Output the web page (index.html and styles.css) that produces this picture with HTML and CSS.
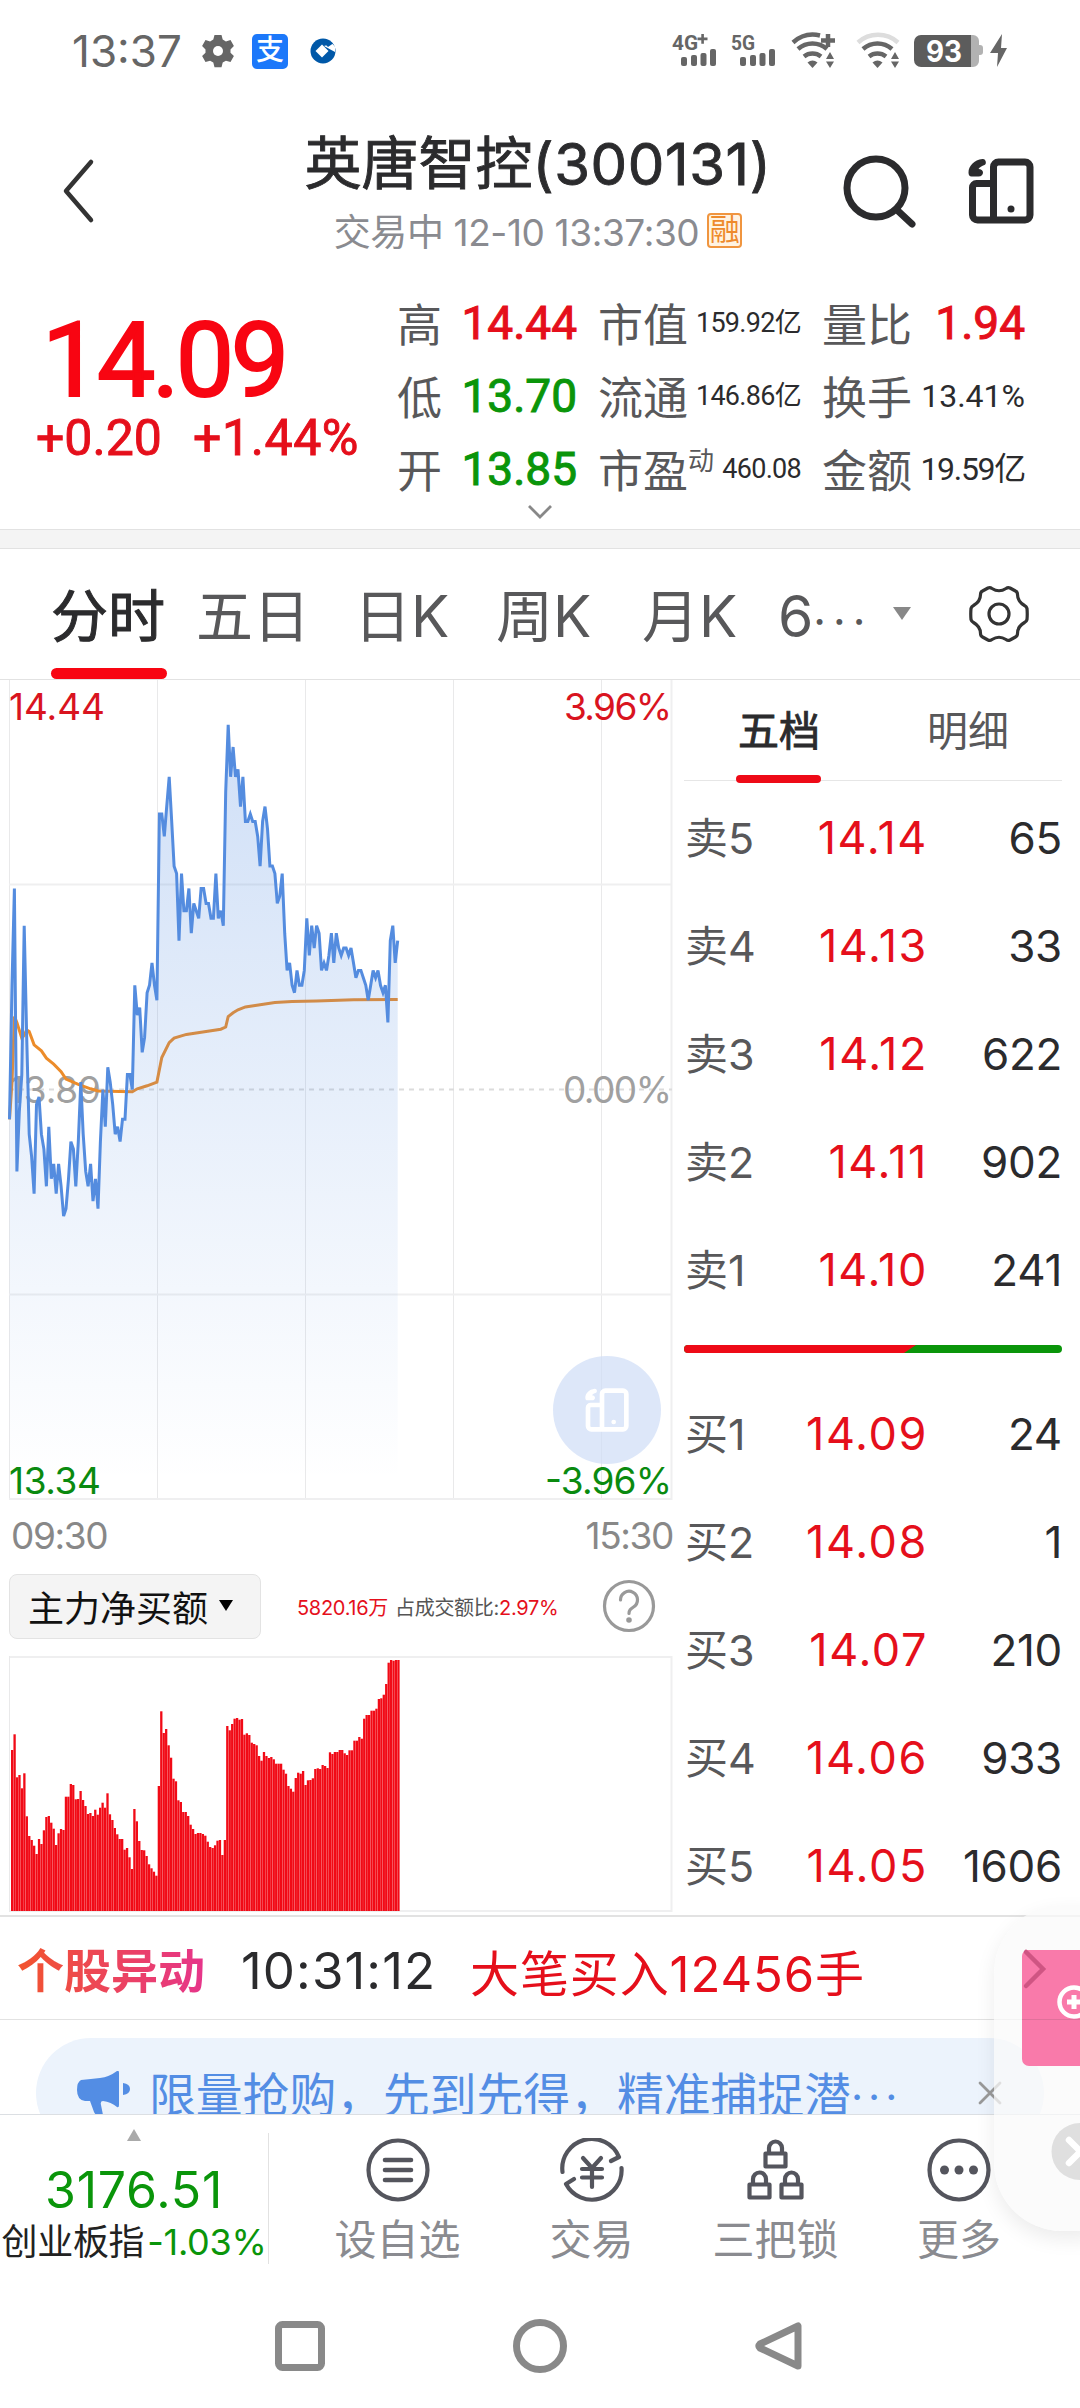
FILE: index.html
```html
<!DOCTYPE html>
<html lang="zh-CN">
<head>
    <meta charset="UTF-8">
    <meta name="viewport" content="width=device-width, initial-scale=1.0">
    <title>英唐智控(300131)</title>
    <link rel="stylesheet" href="styles.css">
</head>
<body>
    <div id="app">
        <div class="status-bar">
            <span class="clock">13:37</span>
            <svg class="st-gear" width="34" height="34" viewBox="0 0 34 34">
                <path d="M13.5 1h7l1.2 4.6 3.2 1.8 4.6-1.3 3.4 6-3.4 3.3v3.4l3.4 3.3-3.4 6-4.6-1.3-3.2 1.8-1.2 4.6h-7l-1.2-4.6-3.2-1.8-4.6 1.3-3.4-6 3.4-3.3v-3.4L1.1 12.1l3.4-6 4.6 1.3 3.2-1.8z" fill="#666"/>
                <circle cx="17" cy="17" r="5" fill="#fff"/>
            </svg>
            <span class="st-pay">支</span>
            <svg class="st-bank" width="26" height="26" viewBox="0 0 26 26">
                <circle cx="13" cy="13" r="12.5" fill="#0058a8"/>
                <path d="M12 6.5l6.5 6.5-6.5 6.5-6.5-6.5z" fill="#fff"/>
                <path d="M14 8l11 6V8.5l-3-3z" fill="#fff"/>
                <path d="M15.5 1l7.5 4.5-5 3.5-4-4z" fill="#0058a8"/>
            </svg>
            <svg class="st-right" width="340" height="40" viewBox="0 0 340 40" fill="#666">
                <g class="net-txt">
                    <text x="0" y="19" textLength="26" lengthAdjust="spacingAndGlyphs">4G</text>
                    <path d="M25.5 6.5h3.8V3h2.6v3.5h3.6v2.7h-3.6v3.5h-2.6V9.2h-3.8z"/>
                    <text x="59" y="19" textLength="24" lengthAdjust="spacingAndGlyphs">5G</text>
                </g>
                <g id="bars1">
                    <rect x="9" y="26" width="6" height="9" rx="2"/><rect x="19" y="24" width="6" height="11" rx="2"/>
                    <rect x="28.5" y="22" width="6" height="13" rx="2"/><rect x="38" y="18" width="6" height="17" rx="2"/>
                </g>
                <use href="#bars1" x="59"/>
                <g id="wifi" fill="none" stroke="#666" stroke-width="4.5">
                    <path d="M126 18a22 22 0 0 1 29 0M132 25.5a14 14 0 0 1 17 0"/>
                    <path d="M135.5 31.5a8 8 0 0 1 10 0l-5 5.5z" fill="#666" stroke="none"/>
                    <path d="M158 21l4 7h-8zM158 37l4-6.5h-8z" fill="#666" stroke="none"/>
                </g>
                <path d="M121 11.5a30 30 0 0 1 27-7M149 9.5h14M156 3v13" fill="none" stroke="#666" stroke-width="4.5"/>
                <use href="#wifi" x="65"/>
                <path d="M186 11.5a30 30 0 0 1 40 0" fill="none" stroke="#ddd" stroke-width="4.5"/>
                <path d="M296 4h5a6 6 0 0 1 6 6v4h1a3 3 0 0 1 3 3v4a3 3 0 0 1-3 3h-1v6a6 6 0 0 1-6 6h-5z" fill="#b2b2b2"/>
                <path d="M249 4h50v32h-50a7 7 0 0 1-7-7V11a7 7 0 0 1 7-7z" fill="#5c5c5c"/>
                <text class="batt" x="254" y="30.5" textLength="36" lengthAdjust="spacingAndGlyphs">93</text>
                <path d="M330 3l-12 19h8l-1 14 10-19h-6z"/>
            </svg>
        </div>

        <div class="header">
            <svg class="back" width="40" height="66" viewBox="0 0 40 66"><path d="M33 4L8 33l25 29" fill="none" stroke="#333" stroke-width="4.5" stroke-linecap="round" stroke-linejoin="round"/></svg>
            <div class="title">
                <h1>英唐智控<span>(300131)</span></h1>
                <p>交易中 12-10 13:37:30<i>融</i></p>
            </div>
            <svg class="search" width="76" height="76" viewBox="0 0 76 76" fill="none" stroke="#2b2b2d" stroke-width="7" stroke-linecap="round"><circle cx="34" cy="34" r="29"/><path d="M55 56l15 14"/></svg>
            <svg class="split" width="66" height="66" viewBox="0 0 66 66">
                <g id="panel">
                    <path d="M25.5 25.5H8.5a4 4 0 0 0-4 4V57a5 5 0 0 0 5 5H57a5 5 0 0 0 5-5V9a5 5 0 0 0-5-5H30.5a5 5 0 0 0-5 5v53" fill="none" stroke="currentColor" stroke-width="7"/>
                    <circle cx="43" cy="51" r="3.5" fill="currentColor"/>
                    <path d="M14.5 1C6 2 .5 8 .5 14.5c0 2.500 1 4 3 4h7c3 0 4.500-2 4.500-4s-2-3.500-4.500-3.500c1-2 3.500-3 6-4 2.500-1 1.500-6.500-2-6z" fill="currentColor"/>
                </g>
            </svg>
        </div>

        <div class="quote">
            <div class="price">
                <strong>14.09</strong>
                <p><span>+0.20</span><span>+1.44%</span></p>
            </div>
            <ul class="stats">
                <li>高<b class="up">14.44</b></li>
                <li>市值<em>159.92亿</em></li>
                <li>量比<b class="up">1.94</b></li>
                <li>低<b class="down">13.70</b></li>
                <li>流通<em>146.86亿</em></li>
                <li>换手<em class="mid">13.41%</em></li>
                <li>开<b class="down">13.85</b></li>
                <li>市盈<sup>动</sup><em>460.08</em></li>
                <li>金额<em class="mid cap">19.59亿</em></li>
            </ul>
        </div>
        <div class="more-line">
            <svg width="28" height="18" viewBox="0 0 28 18"><path d="M3 3l11 11L25 3" fill="none" stroke="#888" stroke-width="2.800"/></svg>
        </div>
        <div class="band"></div>

        <div class="tabs">
            <span class="active">分时</span>
            <span>五日</span>
            <span>日K</span>
            <span>周K</span>
            <span>月K</span>
            <span>6<small>···</small></span>
            <svg width="20" height="14" viewBox="0 0 20 14"><path d="M1 0h18l-9 13z" fill="#888"/></svg>
            <svg width="60" height="60" viewBox="0 0 60 60" fill="none" stroke="#333" stroke-width="3.2" stroke-linejoin="round">
                <path d="M19 4q2-1 4 .5 7 4.500 14 0 2-1.500 4-.5l5.500 3q2 1 2 3.500 0 7 7 11 2 1 2.500 3 .5 5.500 0 11-.5 2-2.500 3-7 4-7 11 0 2.500-2 3.500l-5.500 3q-2 1-4-.5-7-4.500-14 0-2 1.500-4 .5l-5.500-3q-2-1-2-3.500 0-7-7-11-2-1-2.500-3-.5-5.500 0-11 .5-2 2.500-3 7-4 7-11 0-2.500 2-3.500z"/>
                <circle cx="30" cy="30" r="10"/>
            </svg>
        </div>

        <div class="main">
            <div class="left">
                <div class="chart-box">
                    <svg id="trend" width="664" height="821"></svg>
                    <div class="fab"><svg width="44" height="44" viewBox="0 0 66 66"><use href="#panel"/></svg></div>
                </div>
                <div class="axis"><span>09:30</span><span>15:30</span></div>
                <div class="flow-head">
                    <div class="flow-btn">主力净买额<svg width="14" height="12" viewBox="0 0 14 12"><path d="M0 0h14L7 11z"/></svg></div>
                    <p><span class="up">5820.16万</span><span class="txt">占成交额比:</span><span class="up">2.97%</span></p>
                    <svg class="help" width="54" height="54" viewBox="0 0 54 54" fill="none" stroke="#999" stroke-width="3.2" stroke-linecap="round">
                        <circle cx="27" cy="27" r="24.5"/>
                        <path d="M18.5 21a8.5 8.5 0 1 1 13 7c-3 2-4.500 3-4.500 6.500"/>
                        <circle cx="27" cy="41" r="1.2" fill="#999"/>
                    </svg>
                </div>
                <svg id="flow" width="664" height="256"></svg>
            </div>

            <div class="book">
                <div class="book-tabs"><span class="active">五档</span><span>明细</span></div>
                <ul>
                    <li><span>卖5</span><b>14.14</b><em>65</em></li>
                    <li><span>卖4</span><b>14.13</b><em>33</em></li>
                    <li><span>卖3</span><b>14.12</b><em>622</em></li>
                    <li><span>卖2</span><b>14.11</b><em>902</em></li>
                    <li><span>卖1</span><b>14.10</b><em>241</em></li>
                </ul>
                <div class="ratio"><i></i></div>
                <ul>
                    <li><span>买1</span><b>14.09</b><em>24</em></li>
                    <li><span>买2</span><b>14.08</b><em>1</em></li>
                    <li><span>买3</span><b>14.07</b><em>210</em></li>
                    <li><span>买4</span><b>14.06</b><em>933</em></li>
                    <li><span>买5</span><b>14.05</b><em>1606</em></li>
                </ul>
            </div>
        </div>

        <div class="ticker">
            <strong>个股异动</strong>
            <span class="time">10:31:12</span>
            <span class="msg">大笔买入12456手</span>
        </div>

        <div class="notice-wrap">
            <div class="notice">
                <svg width="54" height="46" viewBox="0 0 54 46" fill="#538de4">
                    <path d="M4 9q10-1 19-2 9-1 17-7 2-1 2 2v32q0 3-2 2-6-5-14-6-3 0-2 4l2 10q-7 2-9-3l-4-11H8Q0 29 0 19 0 11 4 9z"/>
                    <path d="M46 12q7 1 7 6t-7 6z"/>
                </svg>
                <p>限量抢购，先到先得，精准捕捉潜<small>···</small></p>
                <svg class="close" width="24" height="24" viewBox="0 0 24 24"><path d="M2 2l20 20M22 2L2 22" stroke="#999" stroke-width="2.8" stroke-linecap="round"/></svg>
            </div>
        </div>

        <div class="toolbar">
            <div class="index">
                <svg width="14" height="12" viewBox="0 0 14 12"><path d="M7 0l7 12H0z" fill="#aaa"/></svg>
                <strong>3176.51</strong>
                <p>创业板指<span>-1.03%</span></p>
            </div>
            <div class="tool">
                <svg width="64" height="64" viewBox="0 0 64 64" fill="none" stroke="#54555d" stroke-width="4.2"><circle cx="32" cy="32" r="29.5"/><path d="M19 22h26M19 32h26M19 42h26" stroke-width="4.6" stroke-linecap="round"/></svg>
                <span>设自选</span>
            </div>
            <div class="tool">
                <svg width="66" height="64" viewBox="0 0 66 64" fill="none" stroke="#54555d" stroke-width="4.2" stroke-linecap="round" stroke-linejoin="round">
                    <path d="M3.5 34A29.5 29.5 0 0 1 60 19l-8 4M62.5 30A29.5 29.5 0 0 1 7 46l8-5"/>
                    <path d="M24 20l9 10 9-10M33 30v19M23 31h20M23 39.5h20"/>
                </svg>
                <span>交易</span>
            </div>
            <div class="tool">
                <svg width="58" height="62" viewBox="0 0 58 62" fill="none" stroke="#54555d" stroke-width="4.2" stroke-linejoin="round">
                    <g id="lock"><rect x="18.5" y="14.5" width="20" height="13"/><path d="M22 14V9a6.5 6.5 0 0 1 13 0v5"/></g>
                    <use href="#lock" x="-16" y="31"/>
                    <use href="#lock" x="16" y="31"/>
                </svg>
                <span>三把锁</span>
            </div>
            <div class="tool">
                <svg width="64" height="64" viewBox="0 0 64 64" fill="#54555d"><circle cx="32" cy="32" r="29.5" fill="none" stroke="#54555d" stroke-width="4.2"/><circle cx="17.5" cy="32" r="4.5"/><circle cx="32" cy="32" r="4.5"/><circle cx="46.5" cy="32" r="4.5"/></svg>
                <span>更多</span>
            </div>
        </div>

        <div class="sys-nav">
            <svg width="54" height="54" viewBox="0 0 54 54"><rect x="5.5" y="5.5" width="43" height="43" rx="4"/></svg>
            <svg width="54" height="54" viewBox="0 0 54 54"><circle cx="27" cy="27" r="23.5"/></svg>
            <svg width="54" height="54" viewBox="0 0 54 54"><path d="M45 7v40L7 29q-2-2 0-4z"/></svg>
        </div>

        <!-- 右侧悬浮窗 -->
        <div class="float">
            <svg width="86" height="325" viewBox="0 0 86 325">
                <path d="M86 45H34a6 6 0 0 0-6 6v103a7 7 0 0 0 7 7h51z" fill="#f97aaa"/>
                <path d="M32 47l17 17-17 17" fill="none" stroke="#cf5583" stroke-width="4.5" stroke-linecap="round"/>
                <path d="M28 114.500h58" stroke="#e0709a" stroke-width="1"/>
                <circle cx="80" cy="97" r="14.5" fill="none" stroke="#fff" stroke-width="4.5"/>
                <path d="M73 97h14M80 90v14" stroke="#fff" stroke-width="5"/>
                <circle cx="86" cy="246.5" r="28.5" fill="#dfdfdf"/>
                <path d="M75 235l23 23M75 258l23-23" stroke="#fff" stroke-width="6.5" stroke-linecap="round"/>
            </svg>
        </div>
    </div>
    <script src="chart.js"></script>
</body>
</html>
```
FILE: styles.css
```css
*{
    margin: 0;
    padding: 0;
    box-sizing: border-box;
}

body{
    width: 1080px;
    background: #fff;
    color: #2b2b2d;
    font-family: "Inter", "Noto Sans CJK SC", sans-serif;
}

ul{
    list-style: none;
}
b, em, i{
    font-style: normal;
    font-weight: normal;
}
svg{
    display: block;
    flex: none;
}

#app{
    position: relative;
    width: 1080px;
    height: 2408px;
    overflow: hidden;
}

.up{
    color: #e50f1b;
}
.down{
    color: #0a950a;
}

/* 状态栏 */
.status-bar{
    display: flex;
    align-items: center;
    height: 102px;
    padding-left: 72px;
    color: #666;
}
.clock{
    width: 129px;
    font-size: 44px;
}
.st-pay{
    width: 36px;
    height: 35px;
    margin-left: 17px;
    border-radius: 5px;
    background: #1c78fa;
    color: #fff;
    font-size: 28px;
    font-weight: 500;
    line-height: 33px;
    text-align: center;
}
.st-bank{
    margin-left: 22px;
}
.st-right{
    margin-left: 336px;
}
.net-txt{
    font: bold 20px "Roboto", sans-serif;
}
.batt{
    font: bold 30px "Inter", sans-serif;
    fill: #fff;
}

/* 标题 */
.header{
    display: flex;
    height: 168px;
    padding-left: 58px;
}
.back{
    margin-top: 56px;
}
.title{
    width: 600px;
    margin-left: 140px;
    padding-top: 27px;
}
.title h1{
    display: flex;
    justify-content: center;
    height: 70px;
    font-size: 57px;
    font-weight: 400;
    line-height: 70px;
    white-space: nowrap;
    -webkit-text-stroke: 0.9px #2b2b2d;
}
.title h1 span{
    font-size: 58px;
    letter-spacing: 0.6px;
}
.title p{
    display: flex;
    justify-content: center;
    align-items: center;
    height: 62px;
    color: #8a8b90;
    font-size: 37px;
    letter-spacing: -0.4px;
    white-space: pre;
}
.title i{
    width: 35px;
    height: 35px;
    margin-left: 8px;
    border: 2px solid #f0953f;
    border-radius: 4px;
    background: #fff3e2;
    color: #ee8a2c;
    font-size: 30px;
    line-height: 29px;
    letter-spacing: 0;
    text-align: center;
}
.search{
    margin: 52px 0 0 4px;
}
.split{
    margin: 56px 0 0 50px;
    color: #2b2b2d;
}

/* 行情 */
.quote{
    display: flex;
    height: 233px;
    font-family: "Roboto", "Noto Sans CJK SC", sans-serif;
}
.price{
    width: 397px;
    padding-top: 37px;
    color: #f80512;
}
.price strong{
    display: block;
    height: 107px;
    padding-left: 42px;
    font-size: 104px;
    font-weight: 400;
    line-height: 107px;
    letter-spacing: -3.5px;
    -webkit-text-stroke: 2px #f80512;
}
.price p{
    display: flex;
    height: 48px;
    color: #e50f1b;
    padding-left: 36px;
    font-size: 50px;
    line-height: 48px;
    white-space: nowrap;
    -webkit-text-stroke: 0.9px #e50f1b;
}
.price p span{
    width: 157px;
}
.price p span:last-child{
    letter-spacing: 0.6px;
}
.stats{
    display: grid;
    grid-template-columns: 180px 203px 203px;
    grid-auto-rows: 73px;
    column-gap: 21px;
    padding-top: 20px;
}
.stats li{
    display: flex;
    align-items: center;
    height: 73px;
    color: #58585a;
    font-size: 45px;
    line-height: 73px;
    white-space: nowrap;
}
.stats b{
    margin-left: auto;
    padding-bottom: 6px;
    font-size: 46px;
    -webkit-text-stroke: 1px currentColor;
}
.stats .up{
    color: #e50f1b;
}
.stats em{
    margin-left: auto;
    padding-bottom: 6px;
    color: #2b2b2d;
    font-size: 27px;
    letter-spacing: -0.7px;
}
.stats .mid{
    font-size: 32px;
    letter-spacing: 0;
}
.stats .cap{
    letter-spacing: -1.3px;
}
.stats sup{
    padding-bottom: 24px;
    font-size: 26px;
    line-height: 26px;
}
.more-line{
    height: 26px;
}
.more-line svg{
    margin: 0 auto;
}
.band{
    height: 20px;
    border-top: 1px solid #e2e2e2;
    border-bottom: 1px solid #e2e2e2;
    background: #f4f4f4;
}

/* 周期 */
.tabs{
    display: grid;
    grid-template-columns: 145px 158px 142px 146px 136px 114px 77px 60px;
    align-items: center;
    height: 131px;
    padding-left: 51px;
    border-bottom: 1px solid #e2e2e2;
    color: #58585a;
    font-size: 57px;
}
.tabs span{
    height: 130px;
    line-height: 135px;
    white-space: nowrap;
}
.tabs svg{
    margin-bottom: 1px;
}
.tabs small{
    font-size: 44px;
    letter-spacing: 7px;
}
.tabs .active{
    position: relative;
    width: 116px;
    color: #2b2b2d;
    -webkit-text-stroke: 1px #2b2b2d;
}
.tabs .active::after{
    content: "";
    position: absolute;
    left: 0;
    bottom: 0;
    width: 116px;
    height: 11px;
    border-radius: 6px;
    background: #f80512;
}

.main{
    display: flex;
    height: 1235px;
}
.left{
    width: 684px;
    padding-left: 9px;
}
.chart-box{
    position: relative;
    height: 820px;
}
.fab{
    position: absolute;
    left: 544px;
    top: 676px;
    width: 108px;
    height: 108px;
    padding: 32px;
    border-radius: 50%;
    background: rgba(206, 221, 246, 0.7);
    color: #fff;
}
#trend{
    overflow: visible;
}
#trend text{
    font-size: 37px;
}
.axis{
    display: flex;
    justify-content: space-between;
    height: 74px;
    padding: 0 11px 0 2px;
    color: #888;
    font-size: 37px;
    line-height: 71px;
    letter-spacing: -1.4px;
}
.flow-head{
    display: flex;
    align-items: center;
    height: 82px;
    padding-bottom: 18px;
}
.flow-btn{
    display: flex;
    align-items: center;
    width: 252px;
    height: 65px;
    padding-left: 18px;
    border: 1px solid #e3e3e3;
    border-radius: 8px;
    background: #f4f4f4;
    color: #111;
    font-size: 36px;
}
.flow-btn svg{
    margin-left: 11px;
}
.flow-head p{
    width: 305px;
    margin-left: 36px;
    font-size: 20px;
    letter-spacing: -0.3px;
    white-space: nowrap;
}
.flow-head .txt{
    margin-left: 7px;
    color: #555;
}

/* 五档 */
.book{
    width: 378px;
}
.book-tabs{
    display: grid;
    grid-template-columns: 190px 188px;
    height: 101px;
    border-bottom: 1px solid #e6e6e6;
    color: #58585a;
    font-size: 41px;
    line-height: 103px;
    text-align: center;
}
.book-tabs .active{
    position: relative;
    color: #2b2b2d;
    -webkit-text-stroke: 0.9px #2b2b2d;
}
.book-tabs .active::after{
    content: "";
    position: absolute;
    left: 52px;
    bottom: 0;
    width: 85px;
    height: 8px;
    border-radius: 4px;
    background: #ee0a17;
}
.book ul{
    padding-top: 3px;
}
.book li{
    display: grid;
    grid-template-columns: 90px 154px 1fr;
    height: 108px;
    font-size: 43px;
    line-height: 108px;
    text-align: right;
    white-space: nowrap;
}
.book li span{
    color: #58585a;
    text-align: left;
    padding-left: 1px;
}
.book li b{
    color: #e50f1b;
    font-size: 45px;
    letter-spacing: 1.6px;
}
.book li em{
    font-size: 44px;
    letter-spacing: -0.3px;
}
.ratio{
    height: 8px;
    margin: 21px 0 24px;
    border-radius: 4px;
    background: #0a950a;
    overflow: hidden;
}
.ratio i{
    display: block;
    width: 232px;
    height: 8px;
    background: #ee0a17;
    clip-path: polygon(0 0, 100% 0, 220px 100%, 0 100%);
}

/* 个股异动 */
.ticker{
    display: flex;
    align-items: center;
    height: 105px;
    padding: 5px 0 0 17px;
    border-top: 2px solid #e2e2e2;
    border-bottom: 1px solid #e2e2e2;
    white-space: nowrap;
}
.ticker strong{
    background: linear-gradient(90deg, #f2542d, #e6358b);
    -webkit-background-clip: text;
    background-clip: text;
    color: transparent;
    font-size: 47px;
    line-height: 60px;
    font-weight: 700;
}
.ticker .time{
    width: 229px;
    margin-left: 36px;
    font-size: 51px;
    letter-spacing: 1.1px;
}
.ticker .msg{
    color: #e50f1b;
    font-size: 49px;
    letter-spacing: 0.9px;
}

.notice-wrap{
    height: 94px;
    padding: 18px 36px 0;
    overflow: hidden;
}
.notice{
    display: flex;
    height: 110px;
    padding: 33px 0 0 41px;
    border-radius: 55px;
    background: #ecf3fc;
    color: #538de4;
    font-size: 46.8px;
    line-height: 48px;
}
.notice p{
    width: 829px;
    margin-left: 18px;
    white-space: nowrap;
}
.notice small{
    font-size: 42px;
    letter-spacing: 5px;
}
.notice .close{
    margin-top: 10px;
}

/* 底部 */
.toolbar{
    display: flex;
    height: 156px;
    border-top: 1px solid #dcdfe3;
}
.index{
    display: flex;
    flex-direction: column;
    align-items: center;
    width: 269px;
    height: 131px;
    margin: 18px 26px 0 0;
    border-right: 1px solid #e2e2e2;
    color: #0a950a;
    white-space: nowrap;
}
.index svg{
    margin-top: -4px;
}
.index strong{
    height: 60px;
    margin-top: 19px;
    font-size: 50px;
    font-weight: 400;
    line-height: 60px;
    letter-spacing: 0.8px;
}
.index p{
    color: #222;
    font-size: 36px;
    line-height: 44px;
    letter-spacing: -0.3px;
}
.index p span{
    color: #0a950a;
    margin-left: 3px;
}
.tool{
    display: flex;
    flex-direction: column;
    align-items: center;
    width: 205px;
    padding-top: 23px;
    color: #8a8b90;
    font-size: 42px;
    line-height: 76px;
}
.tool:nth-child(3){
    width: 183px;
}
.tool:nth-child(4){
    width: 185px;
}
.tool:nth-child(5){
    width: 182px;
}
.tool svg{
    height: 64px;
}
.sys-nav{
    display: flex;
    justify-content: center;
    gap: 186px;
    padding-top: 49px;
}
.sys-nav svg{
    fill: none;
    stroke: #898989;
    stroke-width: 7;
    stroke-linejoin: round;
}

.float{
    position: absolute;
    left: 994px;
    top: 1905px;
    width: 100px;
    height: 326px;
    border-radius: 68px 0 0 68px;
    background: rgba(250, 250, 250, 0.72);
    box-shadow: 0 8px 20px rgba(0, 0, 0, 0.08);
}
```
FILE: chart.js
```js
// 昨收 13.89, 每分钟价格与昨收之差(分)
var aPrice=[
    -4,14,27,-11,-3,2,22,7,-6,-9,-14,-2,-1,-6,-8,-13,-5,-12,-10,-14,
    -10,-13,-17,-16,-12,-7,-8,-13,-7,1,-6,-11,-13,-10,-15,-12,-16,-7,0,-5,
    3,1,-2,-6,-5,-7,-4,-4,2,2,0,14,10,11,5,7,13,14,17,14,
    12,37,37,34,38,42,36,30,29,20,29,24,24,27,21,25,24,23,27,27,
    25,25,23,23,29,23,24,22,40,49,42,46,42,43,38,42,36,36,37,36,
    36,34,30,36,38,35,30,30,29,25,26,29,21,16,17,14,13,16,14,14,
    16,23,18,22,19,22,21,16,17,16,18,21,17,21,19,18,19,19,18,19,
    17,15,16,16,15,14,12,14,16,15,16,14,13,14,9,20,22,17,20
];
// 均价线 [分钟, 差值]
var aAvg=[
    [0,-4],[1,1],[2,9.8],[3,9],[5,6.9],[6,7.3],[7,8],[8,7.8],[10,6],[13,5.2],[15,4.2],[18,3.4],[21,2.4],[23,1.4],
    [28,0.7],[33,0.1],[36,-0.2],[45,-0.25],[50,-0.3],[52,0.1],[56,0.5],[60,1],[62,4.3],[65,6.3],[67,6.9],[72,7.4],
    [80,7.8],[86,8.1],[88,8.4],[89,9.8],[91,10.3],[93,10.7],[96,11.1],[100,11.3],[108,11.7],[115,11.8],[125,11.9],[140,12.05],[158,12.1]
];
// 主力净买额
var aFlow=[
    483,530,401,408,368,413,284,225,213,196,171,216,201,242,282,285,265,247,198,233,
    246,243,343,343,381,378,335,336,360,333,315,291,294,285,304,289,310,325,310,353,
    290,273,249,230,216,216,184,189,161,126,306,269,210,183,182,165,140,128,118,106,
    375,599,534,546,497,460,397,389,332,327,297,297,285,259,246,231,234,234,231,226,
    208,192,189,197,211,213,168,213,555,542,561,577,579,574,576,529,533,528,505,501,
    497,465,451,477,465,459,462,455,442,442,442,424,412,375,367,358,399,415,412,420,
    378,392,393,398,426,428,426,438,435,429,476,471,477,477,483,483,473,468,482,482,
    511,511,522,517,577,588,588,601,601,607,636,638,649,681,745,753,751,753,753
];

var STEP=2.457;
var MID=409.5;
var CENT=7.445;

function px(i){
    return (0.5+i*STEP).toFixed(1);
}
function py(v){
    return (MID-v*CENT).toFixed(1);
}

var sLine="";
for(var i=0; i<aPrice.length; ++i){
    sLine+=px(i)+","+py(aPrice[i])+" ";
}
var sAvg="";
for(var i=0; i<aAvg.length; ++i){
    sAvg+=px(aAvg[i][0])+","+py(aAvg[i][1])+" ";
}
var sEnd=px(aPrice.length-1);

var sGrid='<path d="M0.5 0V819.5M148.5 0V819M296.5 0V819M444.5 0V819M592.5 0V819" stroke="#e9e9ea" fill="none"/>'+
    '<path d="M0 204.5H663M0 614.5H663M0 819H663M662.5 0V820" stroke="#efeff0" stroke-width="2" fill="none"/>'+
    '<path d="M0 409.5H663" stroke="#dcdcdc" stroke-width="2" stroke-dasharray="5 5"/>';

var sLabel='<text x="0" y="40" fill="#d9141f" textLength="96">14.44</text>'+
    '<text x="663" y="40" fill="#d9141f" text-anchor="end" textLength="108">3.96%</text>'+
    '<text x="0" y="423" fill="#a0a0a0" textLength="92">13.89</text>'+
    '<text x="663" y="423" fill="#a0a0a0" text-anchor="end" textLength="109">0.00%</text>'+
    '<text x="0" y="814" fill="#0a8a0f" textLength="92">13.34</text>'+
    '<text x="663" y="814" fill="#0a8a0f" text-anchor="end" textLength="127">-3.96%</text>';

document.getElementById("trend").innerHTML=
    '<defs><linearGradient id="area" gradientUnits="userSpaceOnUse" x1="0" y1="40" x2="0" y2="800">'+
    '<stop offset="0" stop-color="#4e89e0" stop-opacity="0.27"/><stop offset="1" stop-color="#4e89e0" stop-opacity="0"/>'+
    '</linearGradient></defs>'+
    sGrid+sLabel+
    '<polyline points="'+sAvg+'" fill="none" stroke="#ec8c2a" stroke-width="3"/>'+
    '<polygon points="0.5,819 '+sLine+sEnd+',819" fill="url(#area)"/>'+
    '<polyline points="'+sLine+'" fill="none" stroke="#548cdf" stroke-width="3"/>';

// 柱状图
var BAR_STEP=2.445;
var sBars='<path d="M0 1H663M662.5 0V256M0 255H663" stroke="#efeff0" stroke-width="2"/><path d="M0.5 0V256" stroke="#e9e9ea"/>';
for(var i=0; i<aFlow.length; ++i){
    var h=aFlow[i]/3;
    sBars+='<rect x="'+(2+i*BAR_STEP).toFixed(2)+'" y="'+(255-h).toFixed(1)+'" width="2.3" height="'+h.toFixed(1)+'" fill="#f10a16"/>';
}
document.getElementById("flow").innerHTML=sBars;
```
